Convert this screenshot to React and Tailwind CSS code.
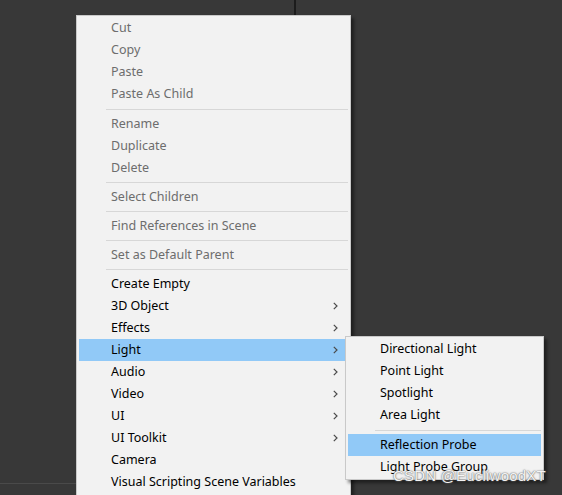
import React from "react";

const font = { fontFamily: '"Noto Sans", "Liberation Sans", sans-serif' };

function Chevron() {
  return (
    <svg width="5" height="8" viewBox="0 0 5 8" className="absolute right-[10px] top-[7px]">
      <polyline points="0.8,0.8 4,4 0.8,7.2" fill="none" stroke="#4a4a4a" strokeWidth="1.2" />
    </svg>
  );
}

function Item({ label, disabled, sub, active }) {
  return (
    <div
      className={`relative h-[22px] mx-[2px] pl-[32px] pt-px flex items-center text-[12.5px] leading-none whitespace-nowrap ${
        active ? "bg-[#91c9f7]" : ""
      } ${disabled ? "text-[#6d6d6d]" : "text-black"}`}
    >
      {label}
      {sub && <Chevron />}
    </div>
  );
}

function Sep({ h = "h-[7px]" }) {
  return (
    <div className={`${h} flex items-center pl-[29px] pr-[2px]`}>
      <div className="h-px w-full bg-[#d7d7d7]" />
    </div>
  );
}

export default function App() {
  return (
    <div className="relative w-[562px] h-[495px] bg-[#383838] overflow-hidden" style={font}>
      {/* panel divider at the top */}
      <div className="absolute left-[294px] top-0 w-[2px] h-[16px] bg-[#1c1c1c]" />
      {/* lower panel edge on the left */}
      <div className="absolute left-0 top-[483px] w-[76px] h-px bg-[#4a4a4a]" />

      {/* main context menu */}
      <div className="absolute left-[76px] top-[15px] w-[275px] h-[500px] bg-[#f2f2f2] border border-[#c9c9c9] pt-px shadow-[3px_3px_3px_rgba(0,0,0,0.45)]">
        <Item label="Cut" disabled />
        <Item label="Copy" disabled />
        <Item label="Paste" disabled />
        <Item label="Paste As Child" disabled />
        <Sep h="h-[8px]" />
        <Item label="Rename" disabled />
        <Item label="Duplicate" disabled />
        <Item label="Delete" disabled />
        <Sep />
        <Item label="Select Children" disabled />
        <Sep />
        <Item label="Find References in Scene" disabled />
        <Sep />
        <Item label="Set as Default Parent" disabled />
        <Sep />
        <Item label="Create Empty" />
        <Item label="3D Object" sub />
        <Item label="Effects" sub />
        <Item label="Light" sub active />
        <Item label="Audio" sub />
        <Item label="Video" sub />
        <Item label="UI" sub />
        <Item label="UI Toolkit" sub />
        <Item label="Camera" />
        <Item label="Visual Scripting Scene Variables" />
      </div>

      {/* light submenu */}
      <div className="absolute left-[345px] top-[336px] w-[199px] bg-[#f2f2f2] border border-[#c9c9c9] py-px shadow-[3px_3px_3px_rgba(0,0,0,0.45)]">
        <Item label="Directional Light" />
        <Item label="Point Light" />
        <Item label="Spotlight" />
        <Item label="Area Light" />
        <Sep h="h-[8px]" />
        <Item label="Reflection Probe" active />
        <Item label="Light Probe Group" />
      </div>

      {/* watermark */}
      <div
        className="absolute left-[393px] top-[468px] text-[15px] leading-none text-[#f4f4f4] tracking-[0.2px]"
        style={{ fontFamily: '"Liberation Sans", Arial, sans-serif', textShadow: "0 0 1px #666, 0 0 2px #777" }}
      >
        CSDN @EucliwoodXT
      </div>
    </div>
  );
}
